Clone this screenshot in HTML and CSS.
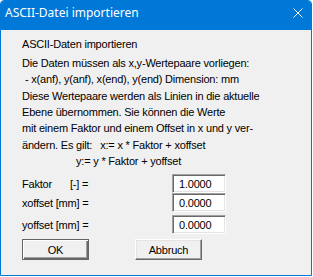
FILE: index.html
```html
<!DOCTYPE html>
<html lang="de">
<head>
    <meta charset="UTF-8">
    <title>ASCII-Datei importieren</title>
    <link rel="stylesheet" href="styles.css">
</head>
<body>
    <div class="dialog">
        <div class="titlebar">
            <span class="title">ASCII-Datei importieren</span>
            <svg class="close" width="10" height="10" viewBox="0 0 10 10">
                <path d="M0.5 0.5 L9.5 9.5 M9.5 0.5 L0.5 9.5" stroke="#fff" stroke-width="1" fill="none"/>
            </svg>
        </div>

        <div class="content">
            <p class="heading">ASCII-Daten importieren</p>

            <div class="info">
                <p>Die Daten müssen als x,y-Wertepaare vorliegen:</p>
                <p class="dash">- x(anf), y(anf), x(end), y(end) Dimension: mm</p>
                <p>Diese Wertepaare werden als Linien in die aktuelle</p>
                <p>Ebene übernommen. Sie können die Werte</p>
                <p>mit einem Faktor und einem Offset in x und y ver-</p>
                <p>ändern. Es gilt:<span class="formula">x:= x * Faktor + xoffset</span></p>
                <p class="formula2">y:= y * Faktor + yoffset</p>
            </div>

            <div class="fields">
                <div class="field">
                    <label><span class="name">Faktor</span>[-] =</label>
                    <input type="text" value="1.0000">
                </div>
                <div class="field">
                    <label>xoffset [mm] =</label>
                    <input type="text" value="0.0000">
                </div>
                <div class="field third">
                    <label>yoffset [mm] =</label>
                    <input type="text" value="0.0000">
                </div>
            </div>

            <div class="buttons">
                <button class="default">OK</button>
                <button>Abbruch</button>
            </div>
        </div>
    </div>
</body>
</html>
```

FILE: styles.css
```css
body{
    margin: 0;
    background: #fff;
}
.dialog{
    width: 312px;
    height: 276px;
    box-sizing: border-box;
    border: 1px solid #0078d7;
    border-radius: 4px 4px 0 0;
    background: #f0f0f0;
    display: flex;
    flex-direction: column;
}
.titlebar{
    height: 29px;
    background: #0078d7;
    color: #fff;
    display: flex;
    align-items: flex-start;
    justify-content: space-between;
    padding-left: 4px;
    border-radius: 3px 3px 0 0;
}
.title{
    font-family: "Noto Sans", sans-serif;
    font-size: 12px;
    line-height: 16px;
    margin-top: 4px;
}
.close{
    margin-top: 7px;
    margin-right: 8px;
}
.content{
    padding: 6px 0 0 21px;
    font-family: "Liberation Sans", Arial, sans-serif;
    font-size: 11px;
    letter-spacing: -0.2px;
    color: #000;
}
.content p{
    margin: 0;
}
.heading{
    line-height: 16px;
}
.info{
    margin-top: 3px;
    line-height: 16.33px;
}
.dash{
    padding-left: 3px;
}
.formula{
    margin-left: 8px;
}
.formula2{
    padding-left: 54px;
}
.fields{
    margin-top: 5px;
}
.field{
    display: flex;
    align-items: center;
    height: 19px;
}
.field.third{
    margin-top: 3px;
}
.field label{
    width: 150px;
}
.name{
    display: inline-block;
    width: 48px;
}
.field input{
    width: 54px;
    height: 19px;
    box-sizing: border-box;
    margin: 0;
    padding: 0 0 0 6px;
    background: #fff;
    border: 1px solid;
    border-color: #a0a0a0 #fff #fff #a0a0a0;
    box-shadow: inset 1px 1px #696969, inset -1px -1px #e3e3e3;
    font: inherit;
    letter-spacing: inherit;
    color: #000;
    outline: none;
}
.buttons{
    display: flex;
    gap: 46px;
    margin-top: 5px;
}
.buttons button{
    width: 67px;
    height: 21px;
    box-sizing: border-box;
    margin: 0;
    padding: 0;
    background: #f0f0f0;
    border: 1px solid;
    border-color: #fff #696969 #696969 #fff;
    box-shadow: inset -1px -1px #a0a0a0, inset 1px 1px #e3e3e3;
    font: inherit;
    letter-spacing: inherit;
    color: #000;
}
.buttons button.default{
    border-color: #646464;
    box-shadow: inset 1px 1px #fff, inset -1px -1px #696969, inset -2px -2px #a0a0a0;
}
```
